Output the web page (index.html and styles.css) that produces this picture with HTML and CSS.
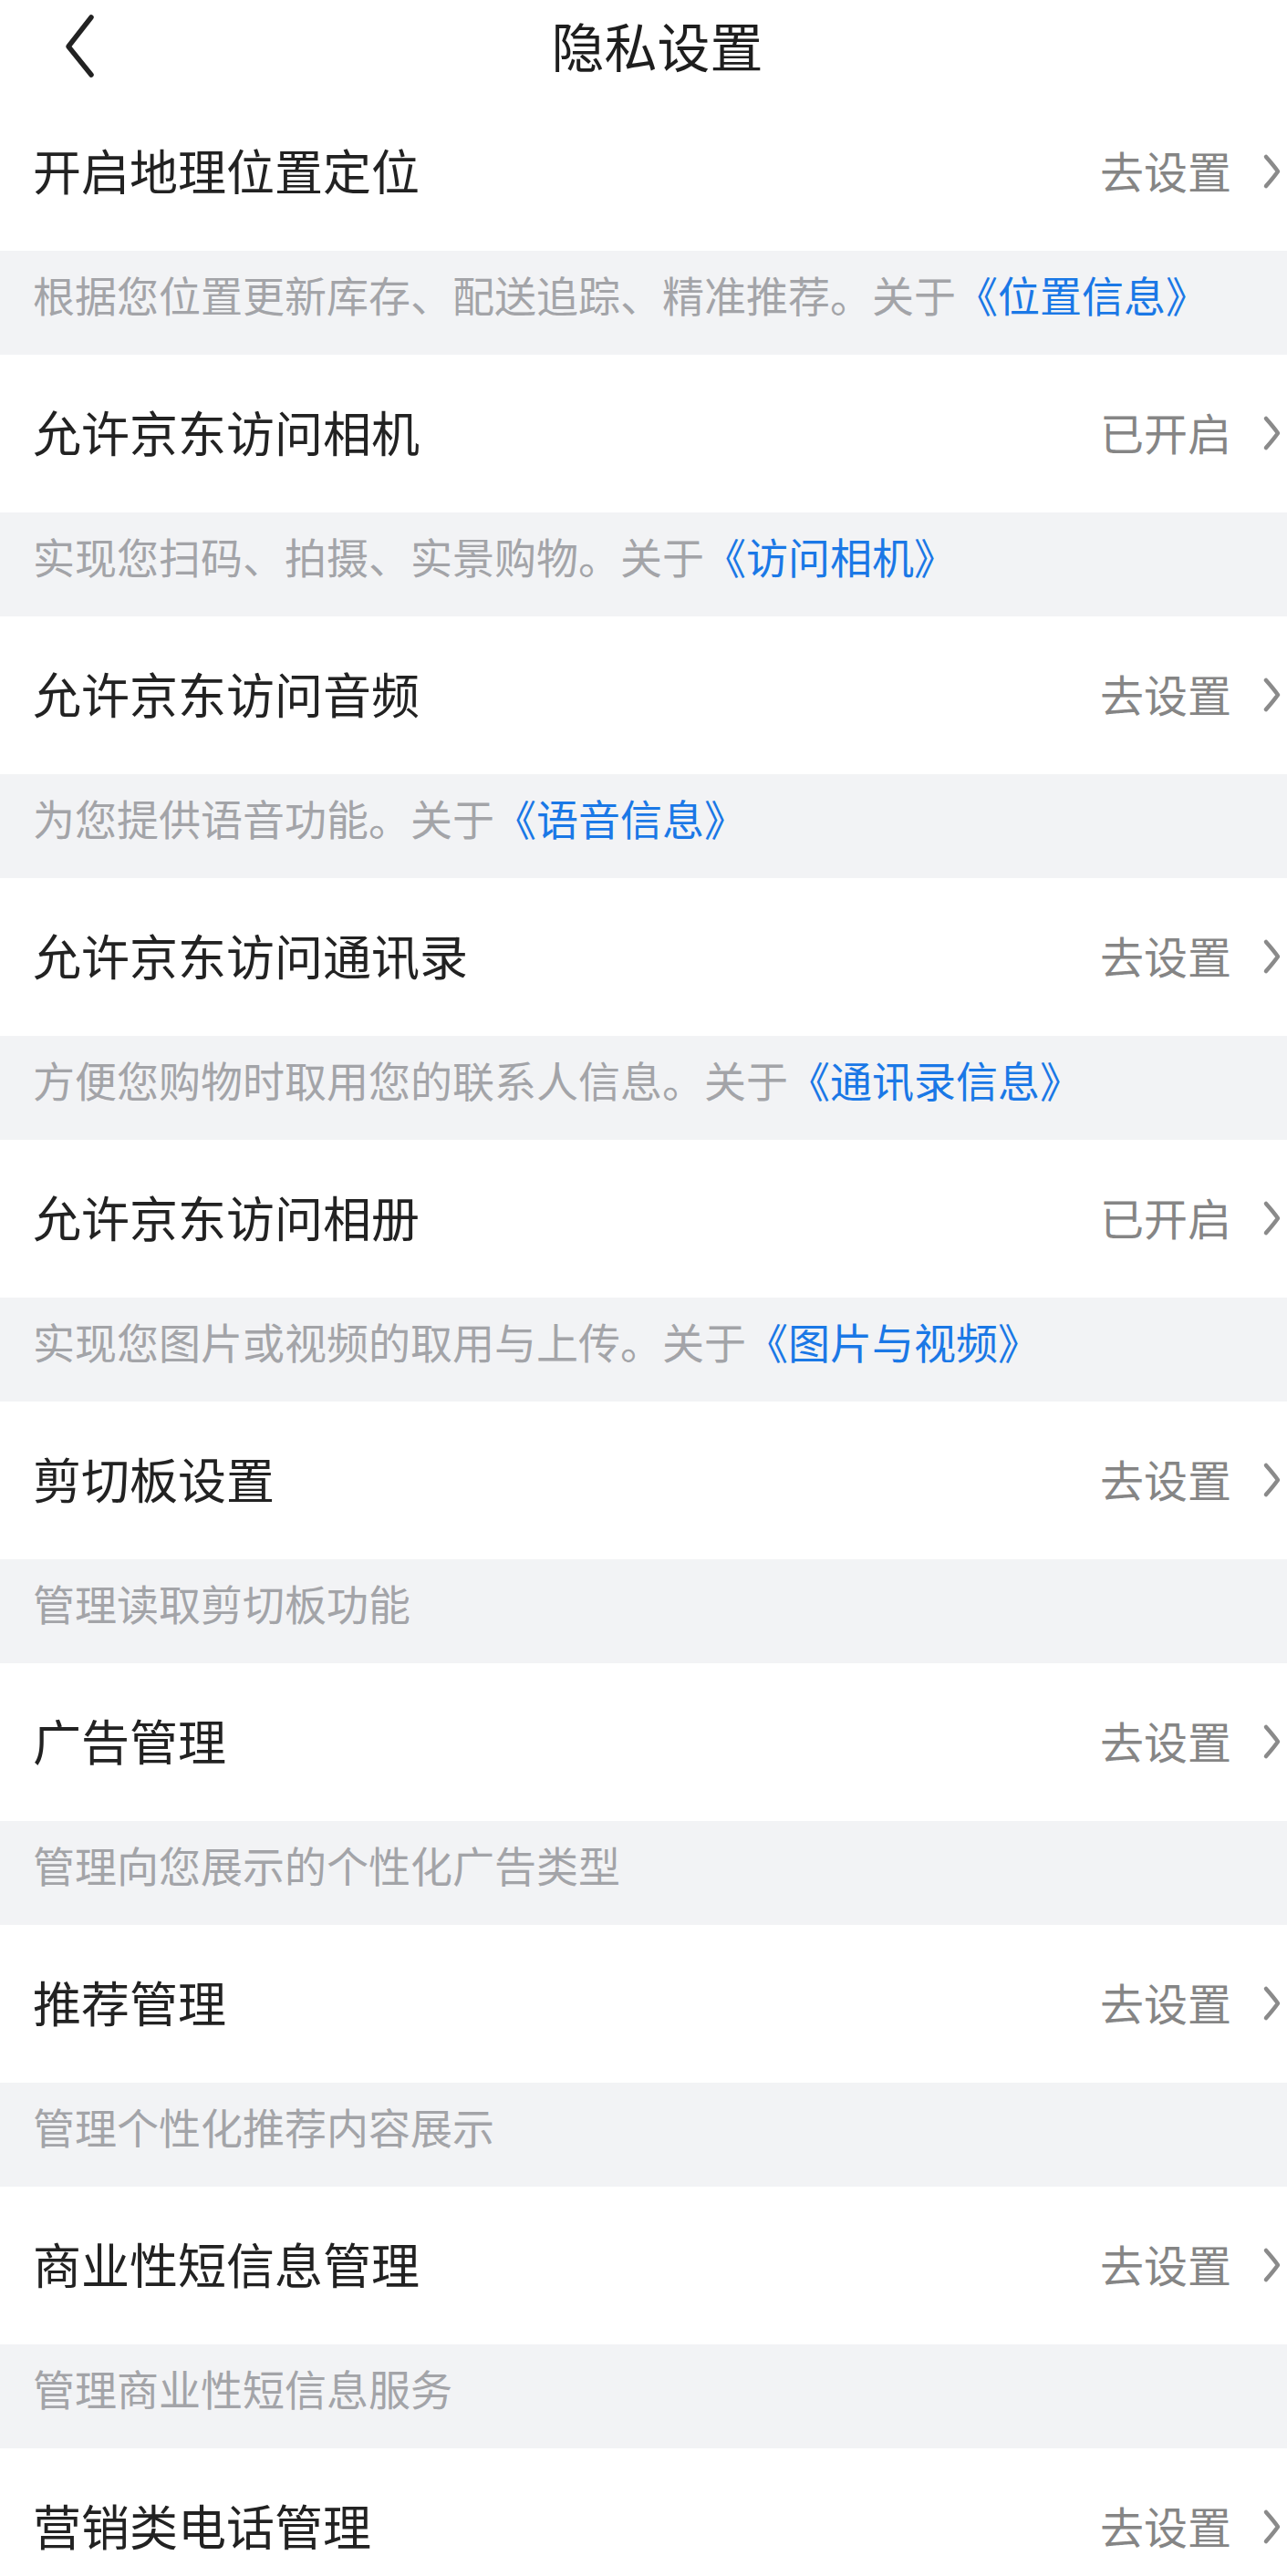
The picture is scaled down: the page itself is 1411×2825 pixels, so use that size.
FILE: index.html
```html
<!DOCTYPE html>
<html lang="zh-CN">
<head>
<meta charset="utf-8">
<title>隐私设置</title>
<link rel="stylesheet" href="styles.css">
</head>
<body>
<div class="page">
  <header class="header">
    <div class="back">
      <svg width="40" height="80" viewBox="0 0 40 80"><path d="M30 8 L5 40 L30 71" fill="none" stroke="#222" stroke-width="5.5" stroke-linecap="round" stroke-linejoin="round"/></svg>
    </div>
    <h1 class="title">隐私设置</h1>
    <div class="spacer"></div>
  </header>

  <div class="row"><span class="label">开启地理位置定位</span><span class="value">去设置</span><svg class="chev" width="20" height="40" viewBox="0 0 20 40"><path d="M4 4 Q12 13 17 20 Q12 27 4 36" fill="none" stroke="#8a8a8a" stroke-width="4.5" stroke-linecap="round" stroke-linejoin="round"/></svg></div>
  <div class="desc">根据您位置更新库存、配送追踪、精准推荐。关于<span class="link">《位置信息》</span></div>

  <div class="row"><span class="label">允许京东访问相机</span><span class="value">已开启</span><svg class="chev" width="20" height="40" viewBox="0 0 20 40"><path d="M4 4 Q12 13 17 20 Q12 27 4 36" fill="none" stroke="#8a8a8a" stroke-width="4.5" stroke-linecap="round" stroke-linejoin="round"/></svg></div>
  <div class="desc">实现您扫码、拍摄、实景购物。关于<span class="link">《访问相机》</span></div>

  <div class="row"><span class="label">允许京东访问音频</span><span class="value">去设置</span><svg class="chev" width="20" height="40" viewBox="0 0 20 40"><path d="M4 4 Q12 13 17 20 Q12 27 4 36" fill="none" stroke="#8a8a8a" stroke-width="4.5" stroke-linecap="round" stroke-linejoin="round"/></svg></div>
  <div class="desc">为您提供语音功能。关于<span class="link">《语音信息》</span></div>

  <div class="row"><span class="label">允许京东访问通讯录</span><span class="value">去设置</span><svg class="chev" width="20" height="40" viewBox="0 0 20 40"><path d="M4 4 Q12 13 17 20 Q12 27 4 36" fill="none" stroke="#8a8a8a" stroke-width="4.5" stroke-linecap="round" stroke-linejoin="round"/></svg></div>
  <div class="desc">方便您购物时取用您的联系人信息。关于<span class="link">《通讯录信息》</span></div>

  <div class="row"><span class="label">允许京东访问相册</span><span class="value">已开启</span><svg class="chev" width="20" height="40" viewBox="0 0 20 40"><path d="M4 4 Q12 13 17 20 Q12 27 4 36" fill="none" stroke="#8a8a8a" stroke-width="4.5" stroke-linecap="round" stroke-linejoin="round"/></svg></div>
  <div class="desc">实现您图片或视频的取用与上传。关于<span class="link">《图片与视频》</span></div>

  <div class="row"><span class="label">剪切板设置</span><span class="value">去设置</span><svg class="chev" width="20" height="40" viewBox="0 0 20 40"><path d="M4 4 Q12 13 17 20 Q12 27 4 36" fill="none" stroke="#8a8a8a" stroke-width="4.5" stroke-linecap="round" stroke-linejoin="round"/></svg></div>
  <div class="desc">管理读取剪切板功能</div>

  <div class="row"><span class="label">广告管理</span><span class="value">去设置</span><svg class="chev" width="20" height="40" viewBox="0 0 20 40"><path d="M4 4 Q12 13 17 20 Q12 27 4 36" fill="none" stroke="#8a8a8a" stroke-width="4.5" stroke-linecap="round" stroke-linejoin="round"/></svg></div>
  <div class="desc">管理向您展示的个性化广告类型</div>

  <div class="row"><span class="label">推荐管理</span><span class="value">去设置</span><svg class="chev" width="20" height="40" viewBox="0 0 20 40"><path d="M4 4 Q12 13 17 20 Q12 27 4 36" fill="none" stroke="#8a8a8a" stroke-width="4.5" stroke-linecap="round" stroke-linejoin="round"/></svg></div>
  <div class="desc">管理个性化推荐内容展示</div>

  <div class="row"><span class="label">商业性短信息管理</span><span class="value">去设置</span><svg class="chev" width="20" height="40" viewBox="0 0 20 40"><path d="M4 4 Q12 13 17 20 Q12 27 4 36" fill="none" stroke="#8a8a8a" stroke-width="4.5" stroke-linecap="round" stroke-linejoin="round"/></svg></div>
  <div class="desc">管理商业性短信息服务</div>

  <div class="row"><span class="label">营销类电话管理</span><span class="value">去设置</span><svg class="chev" width="20" height="40" viewBox="0 0 20 40"><path d="M4 4 Q12 13 17 20 Q12 27 4 36" fill="none" stroke="#8a8a8a" stroke-width="4.5" stroke-linecap="round" stroke-linejoin="round"/></svg></div>
</div>
</body>
</html>
```
FILE: styles.css
```css
html, body {
  margin: 0;
  padding: 0;
  background: #ffffff;
}
body {
  font-family: "Noto Sans CJK SC", "Noto Sans", sans-serif;
  color: #222222;
}
.page {
  width: 1411px;
}
.header {
  height: 102px;
  display: grid;
  grid-template-columns: 150px 1fr 120px;
  align-items: center;
}
.back {
  padding-left: 70px;
  display: flex;
  align-items: center;
}
.back svg {
  display: block;
}
.title {
  margin: 0;
  font-size: 58px;
  font-weight: 400;
  text-align: center;
  line-height: 1;
  color: #1e1e1e;
  padding-bottom: 4px;
}
.row {
  height: 173px;
  display: flex;
  align-items: center;
  padding: 0 7px 5px 36px;
  box-sizing: border-box;
}
.label {
  flex: 1;
  font-size: 53px;
  line-height: 1;
  color: #222222;
}
.value {
  font-size: 48px;
  line-height: 1;
  color: #858585;
}
.chev {
  display: block;
  margin-left: 34px;
  margin-top: 4px;
}
.desc {
  height: 114px;
  box-sizing: border-box;
  background: #f2f3f5;
  display: flex;
  align-items: center;
  padding: 0 0 20px 36px;
  font-size: 46px;
  line-height: 1;
  color: #a3a4a8;
  white-space: nowrap;
}
.link {
  color: #1a78e6;
}
```
